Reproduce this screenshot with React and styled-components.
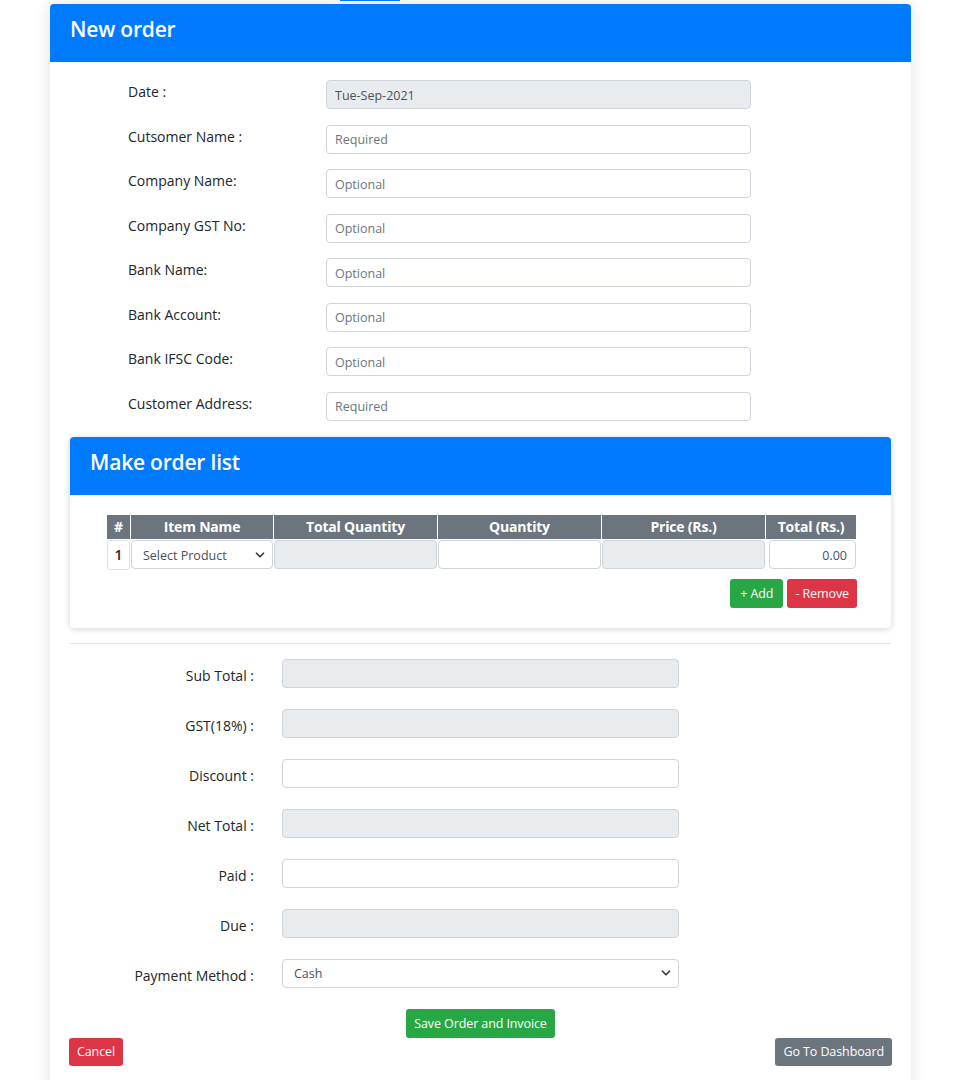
import React from 'react'
import styled, { createGlobalStyle } from 'styled-components'
import { ChevronDown } from 'lucide-react'

const GlobalStyle = createGlobalStyle`
  * { box-sizing: border-box; }
  body {
    margin: 0;
    background: #fff;
    font-family: "Open Sans", "Noto Sans", "Liberation Sans", sans-serif;
    color: #212529;
  }
`

const Page = styled.div`
  width: 957px;
  padding-bottom: 40px;
`

const TopStrip = styled.div`
  height: 4px;
  padding-left: 340px;
  span {
    display: block;
    width: 60px;
    height: 1px;
    background: #007bff;
  }
`

const Card = styled.div`
  margin-left: 50px;
  width: 861px;
  background: #fff;
  border-radius: 4px;
  box-shadow: 0 0 16px rgba(0, 0, 0, 0.12);
  overflow: hidden;
`

const CardHeader = styled.div`
  background: #007bff;
  height: 58px;
  padding: 11px 20px 0;
  h2 {
    margin: 0;
    color: #fff;
    font-size: 21px;
    line-height: 28px;
    font-weight: 600;
    letter-spacing: -0.2px;
  }
`

const CustomerForm = styled.div`
  display: grid;
  grid-template-columns: 198px 425px;
  row-gap: 15.5px;
  padding: 18px 0 16px 78px;
`

const TopLabel = styled.label`
  font-size: 14px;
  line-height: 22px;
  padding-top: 1px;
`

const Input = styled.input`
  height: 29px;
  width: 100%;
  border: 1px solid #ced4da;
  border-radius: 4px;
  background: ${p => (p.readOnly ? '#e9ecef' : '#fff')};
  font-family: inherit;
  font-size: 12.5px;
  color: #495057;
  padding: 1px 8px 0;
  text-align: ${p => p.$align || 'left'};
  &::placeholder { color: #6c757d; }
`

const InnerCard = styled.div`
  margin: 0 20px;
  border-radius: 4px;
  box-shadow: 0 1px 6px rgba(0, 0, 0, 0.18);
  overflow: hidden;
`

const InnerBody = styled.div`
  padding: 20px 34px 20px 37px;
`

const Table = styled.table`
  border-collapse: separate;
  border-spacing: 1px 1px;
  width: 750px;
  margin: -1px 0 0 -1px;
  table-layout: fixed;
  th {
    background: #6c757d;
    color: #fff;
    font-size: 14px;
    font-weight: 700;
    height: 24px;
    padding: 0;
    letter-spacing: -0.2px;
  }
  td {
    padding: 0;
    height: 30px;
  }
`

const NumCell = styled.td`
  border: 1px solid #dee2e6;
  border-radius: 3px;
  text-align: center;
  font-weight: 600;
  font-size: 14px;
`

const SelectWrap = styled.div`
  position: relative;
  width: 100%;
  svg {
    position: absolute;
    right: ${p => p.$arrowRight || 6}px;
    top: 50%;
    transform: translateY(-50%);
    pointer-events: none;
    color: #343a40;
  }
`

const Select = styled.select`
  appearance: none;
  -webkit-appearance: none;
  width: 100%;
  height: 29px;
  border: 1px solid #ced4da;
  border-radius: 4px;
  background: #fff;
  font-family: inherit;
  font-size: 12.5px;
  color: #495057;
  padding: 1px 8px 0 11px;
`

const ButtonRow = styled.div`
  display: flex;
  justify-content: flex-end;
  gap: 4px;
  margin-top: 8px;
`

const Button = styled.button`
  background: ${p => p.$color};
  color: #fff;
  border: none;
  border-radius: 3px;
  height: ${p => p.$h || 29}px;
  padding: 0 ${p => p.$px || 8}px;
  font-family: inherit;
  font-size: 12.5px;
  letter-spacing: -0.1px;
`

const Divider = styled.hr`
  margin: 15px 20px 15px;
  border: none;
  border-top: 1px solid #e5e5e5;
`

const SummaryForm = styled.div`
  display: grid;
  grid-template-columns: 134px 397px;
  column-gap: 28px;
  row-gap: 21px;
  padding-left: 70px;
`

const SummaryLabel = styled.label`
  text-align: right;
  font-size: 14px;
  line-height: 22px;
  padding-top: 6px;
`

const SaveRow = styled.div`
  display: flex;
  justify-content: center;
  margin-top: 21px;
`

const FooterRow = styled.div`
  display: flex;
  justify-content: space-between;
  padding: 0 19px 30px;
`

const fields = [
  ['Cutsomer Name :', 'Required'],
  ['Company Name:', 'Optional'],
  ['Company GST No:', 'Optional'],
  ['Bank Name:', 'Optional'],
  ['Bank Account:', 'Optional'],
  ['Bank IFSC Code:', 'Optional'],
  ['Customer Address:', 'Required'],
]

const summary = [
  ['Sub Total :', true],
  ['GST(18%) :', true],
  ['Discount :', false],
  ['Net Total :', true],
  ['Paid :', false],
  ['Due :', true],
]

export default function App() {
  return (
    <Page>
      <GlobalStyle />
      <TopStrip><span /></TopStrip>
      <Card>
        <CardHeader><h2>New order</h2></CardHeader>
        <CustomerForm>
          <TopLabel>Date :</TopLabel>
          <Input readOnly value="Tue-Sep-2021" />
          {fields.map(([label, ph]) => (
            <React.Fragment key={label}>
              <TopLabel>{label}</TopLabel>
              <Input placeholder={ph} />
            </React.Fragment>
          ))}
        </CustomerForm>

        <InnerCard>
          <CardHeader><h2>Make order list</h2></CardHeader>
          <InnerBody>
            <Table>
              <colgroup>
                <col style={{ width: 23 }} />
                <col style={{ width: 142 }} />
                <col style={{ width: 163 }} />
                <col style={{ width: 163 }} />
                <col style={{ width: 163 }} />
                <col style={{ width: 90 }} />
              </colgroup>
              <thead>
                <tr>
                  <th>#</th>
                  <th>Item Name</th>
                  <th>Total Quantity</th>
                  <th>Quantity</th>
                  <th>Price (Rs.)</th>
                  <th>Total (Rs.)</th>
                </tr>
              </thead>
              <tbody>
                <tr>
                  <NumCell>1</NumCell>
                  <td>
                    <SelectWrap $arrowRight={6}>
                      <Select defaultValue="">
                        <option value="">Select Product</option>
                      </Select>
                      <ChevronDown size={14} strokeWidth={3} />
                    </SelectWrap>
                  </td>
                  <td><Input readOnly /></td>
                  <td><Input /></td>
                  <td><Input readOnly /></td>
                  <td style={{ paddingLeft: 3 }}><Input $align="right" defaultValue="0.00" /></td>
                </tr>
              </tbody>
            </Table>
            <ButtonRow>
              <Button $color="#28a745" $px={10}>+ Add</Button>
              <Button $color="#dc3545">- Remove</Button>
            </ButtonRow>
          </InnerBody>
        </InnerCard>

        <Divider />

        <SummaryForm>
          {summary.map(([label, ro]) => (
            <React.Fragment key={label}>
              <SummaryLabel>{label}</SummaryLabel>
              <Input readOnly={ro} />
            </React.Fragment>
          ))}
          <SummaryLabel>Payment Method :</SummaryLabel>
          <SelectWrap $arrowRight={6}>
            <Select defaultValue="cash">
              <option value="cash">Cash</option>
              <option value="card">Card</option>
            </Select>
            <ChevronDown size={14} strokeWidth={3} />
          </SelectWrap>
        </SummaryForm>

        <SaveRow>
          <Button $color="#28a745">Save Order and Invoice</Button>
        </SaveRow>
        <FooterRow>
          <Button $color="#dc3545" $h={28}>Cancel</Button>
          <Button $color="#6c757d" $h={28}>Go To Dashboard</Button>
        </FooterRow>
      </Card>
    </Page>
  )
}
